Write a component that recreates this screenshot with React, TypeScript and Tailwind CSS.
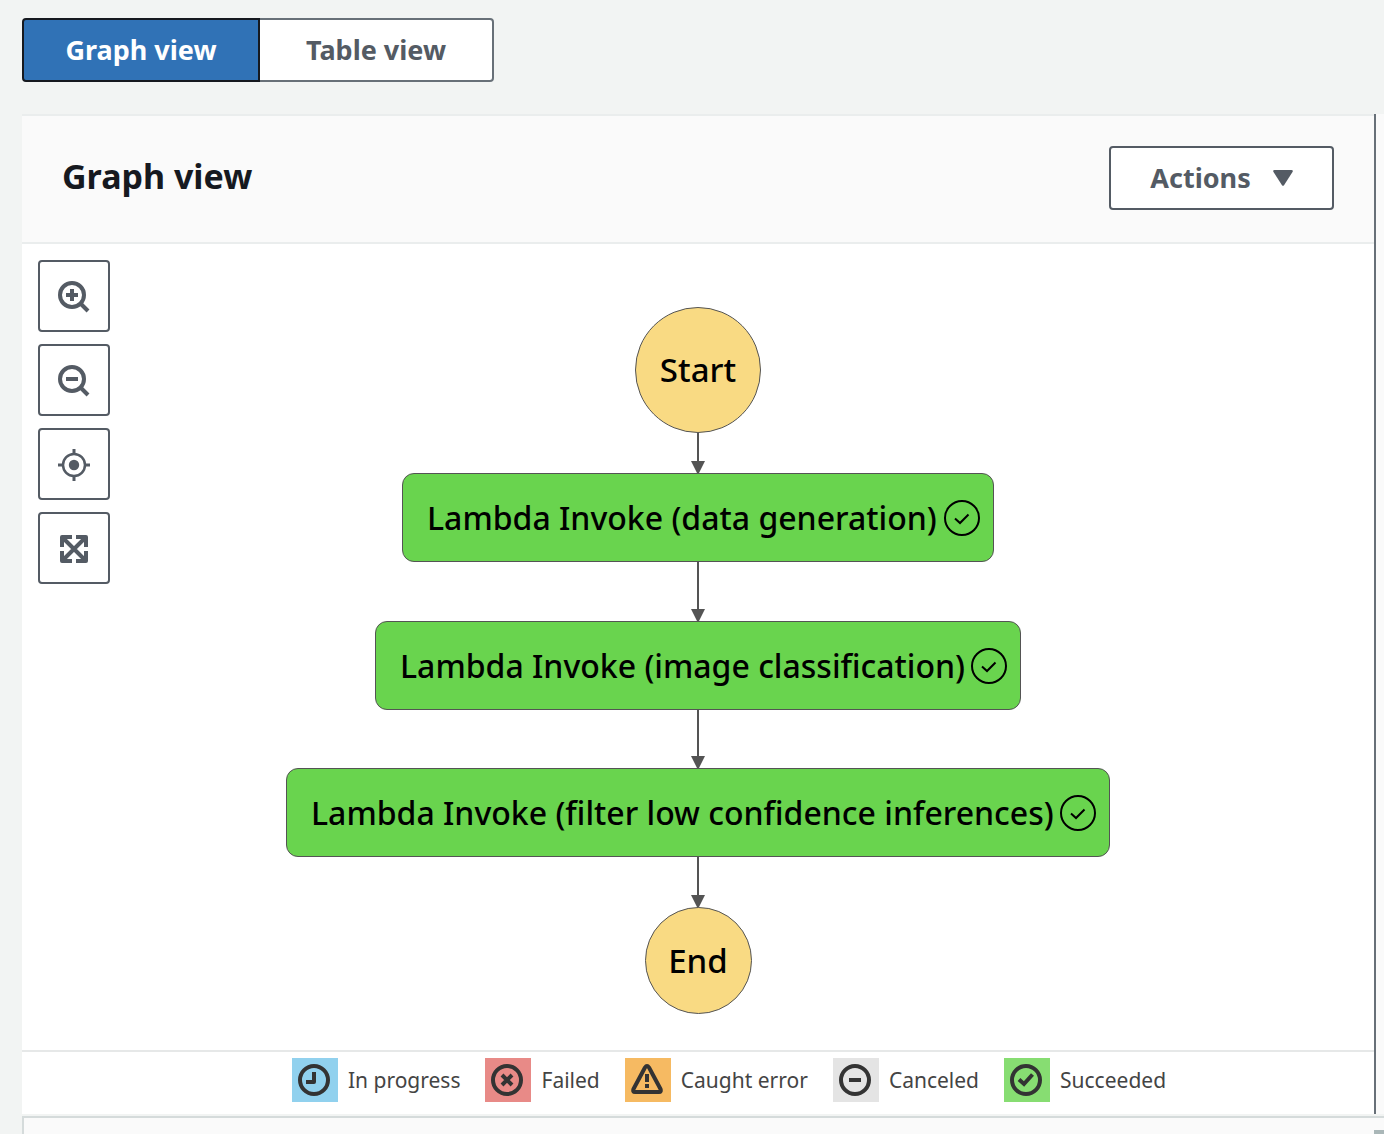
import React from "react";

const INK = "#333333";

function ZoomIcon({ plus }: { plus?: boolean }) {
  return (
    <svg width="32" height="32" viewBox="0 0 32 32" fill="none" stroke="currentColor" strokeWidth="4" aria-hidden="true">
      <circle cx="14" cy="14" r="12" />
      <path d="M22.5 22.5L30 30" />
      <path d={plus ? "M8 14H20M14 8V20" : "M8 14H20"} />
    </svg>
  );
}

function CenterIcon() {
  return (
    <svg width="32" height="32" viewBox="0 0 32 32" fill="none" stroke="currentColor" aria-hidden="true">
      <circle cx="16" cy="16" r="11" strokeWidth="2.5" />
      <circle cx="16" cy="16" r="5.2" fill="currentColor" stroke="none" />
      <path d="M16 0V5M16 27V32M0 16H5M27 16H32" strokeWidth="3" />
    </svg>
  );
}

function FitIcon() {
  return (
    <svg width="32" height="32" viewBox="0 0 32 32" fill="none" stroke="currentColor" strokeWidth="4" aria-hidden="true">
      <path d="M5 5L27 27M27 5L5 27" />
      <path d="M4 14V4H14M18 4H28V14M28 18V28H18M14 28H4V18" strokeLinejoin="round" />
    </svg>
  );
}

function ToolButton({ label, children }: { label: string; children: React.ReactNode }) {
  return (
    <button
      type="button"
      aria-label={label}
      className="flex size-[72px] items-center justify-center rounded border-2 border-[#545b64] bg-white pt-0.5 text-[#545b64]"
    >
      {children}
    </button>
  );
}

function Arrow({ length }: { length: number }) {
  return (
    <svg width="16" height={length} className="block overflow-visible" aria-hidden="true">
      <path d={`M8 0V${length - 10}`} stroke="#545454" strokeWidth="2" />
      <path d={`M1 ${length - 12}H15L8 ${length + 2}z`} fill="#545454" />
    </svg>
  );
}

function Terminal({ label, className }: { label: string; className: string }) {
  return (
    <div
      className={`flex items-center justify-center rounded-full border border-[#545454] bg-[#f9da83] text-[33px] font-medium text-black ${className}`}
    >
      {label}
    </div>
  );
}

function Step({ label, className }: { label: string; className: string }) {
  return (
    <div
      className={`flex items-center justify-between rounded-xl border border-[#545454] bg-[#69d44e] pr-3 pl-6 text-[32px] font-medium whitespace-nowrap text-black ${className}`}
    >
      <span>{label}</span>
      <svg width="38" height="38" viewBox="0 0 38 38" fill="none" stroke="#000" strokeWidth="2" className="shrink-0" aria-hidden="true">
        <circle cx="19" cy="19" r="17" />
        <path d="M12 19.500L17 24L25.500 15.500" />
      </svg>
    </div>
  );
}

function LegendItem({ label, color, children }: { label: string; color: string; children: React.ReactNode }) {
  return (
    <li className="flex items-center gap-2.5">
      <span className={`flex h-11 w-[46px] items-center pl-1.5 ${color}`}>
        <svg width="32" height="32" viewBox="0 0 32 32" fill="none" stroke={INK} strokeWidth="4" aria-hidden="true">
          {children}
        </svg>
      </span>
      <span className="pt-0.5">{label}</span>
    </li>
  );
}

export default function App() {
  return (
    <div className="flex min-h-screen flex-col bg-[#f2f4f3] pt-[18px] font-['Noto_Sans','Open_Sans',sans-serif] text-[#16191f]">
      <div className="ml-[22px] flex text-[27px] font-bold">
        <button
          type="button"
          aria-pressed="true"
          className="z-10 h-16 w-[238px] rounded-l border-2 border-[#16191f] bg-[#3072b6] text-white"
        >
          Graph view
        </button>
        <button
          type="button"
          aria-pressed="false"
          className="-ml-0.5 h-16 w-[236px] rounded-r border-2 border-[#687078] bg-white text-[#545b64]"
        >
          Table view
        </button>
      </div>

      <div className="mt-8 ml-[22px] bg-[#fafafa] pr-2">
        <section className="border-r-2 border-[#687078] bg-white">
          <header className="flex h-[130px] items-center justify-between border-y-2 border-[#eaeded] bg-[#fafafa] px-10 pb-0.5">
            <h2 className="pb-1 text-[34px] font-bold">Graph view</h2>
            <button
              type="button"
              className="flex h-16 w-[225px] items-center justify-center gap-[22px] rounded border-2 border-[#545b64] bg-white text-[27px] font-bold text-[#545b64]"
            >
              Actions
              <svg width="20" height="16" viewBox="0 0 20 16" fill="currentColor" aria-hidden="true">
                <path d="M1.500 0H18.500Q20.500 0 19.500 2L11 15.200Q10 16.500 9 15.200L.5 2Q-.5 0 1.500 0z" />
              </svg>
            </button>
          </header>

          <div className="relative flex flex-col items-center pt-[63px] pb-9">
            <div className="absolute top-4 left-4 flex flex-col gap-3">
              <ToolButton label="Zoom in">
                <ZoomIcon plus />
              </ToolButton>
              <ToolButton label="Zoom out">
                <ZoomIcon />
              </ToolButton>
              <ToolButton label="Center">
                <CenterIcon />
              </ToolButton>
              <ToolButton label="Fit to screen">
                <FitIcon />
              </ToolButton>
            </div>

            <Terminal label="Start" className="size-[126px]" />
            <Arrow length={40} />
            <Step label="Lambda Invoke (data generation)" className="h-[89px] w-[592px]" />
            <Arrow length={59} />
            <Step label="Lambda Invoke (image classification)" className="h-[89px] w-[646px]" />
            <Arrow length={58} />
            <Step label="Lambda Invoke (filter low confidence inferences)" className="h-[89px] w-[824px]" />
            <Arrow length={50} />
            <Terminal label="End" className="size-[107px]" />
          </div>

          <ul className="flex h-16 items-start justify-center gap-[25px] border-t-2 border-[#e6e8e8] pt-1.5 pl-[62px] text-[21px] text-[#444444]">
            <LegendItem label="In progress" color="bg-[#91d1ee]">
              <circle cx="16" cy="16" r="14" />
              <path d="M16 8V18H8" strokeLinejoin="round" />
            </LegendItem>
            <LegendItem label="Failed" color="bg-[#e88a87]">
              <circle cx="16" cy="16" r="14" />
              <path d="M11 11L21 21M21 11L11 21" />
            </LegendItem>
            <LegendItem label="Caught error" color="bg-[#f6ba62]">
              <path d="M14 3.500Q16 .5 18 3.500L29.500 25Q30.500 28 28 28H4Q1.500 28 2.500 25z" strokeLinejoin="round" />
              <path d="M16 10V18M16 20V24" />
            </LegendItem>
            <LegendItem label="Canceled" color="bg-[#e4e4e4]">
              <circle cx="16" cy="16" r="14" />
              <path d="M10 16H22" />
            </LegendItem>
            <LegendItem label="Succeeded" color="bg-[#87dd72]">
              <circle cx="16" cy="16" r="14" />
              <path d="M9 15.500L14 20L22.500 10.500" />
            </LegendItem>
          </ul>
        </section>
      </div>

      <div className="mt-0.5 ml-[22px] flex flex-1 items-end justify-end border-t-2 border-l-2 border-[#d5dbdb] bg-[#fafafa]">
        <div className="h-1 w-2.5 bg-[#aab7b8]" />
      </div>
    </div>
  );
}
